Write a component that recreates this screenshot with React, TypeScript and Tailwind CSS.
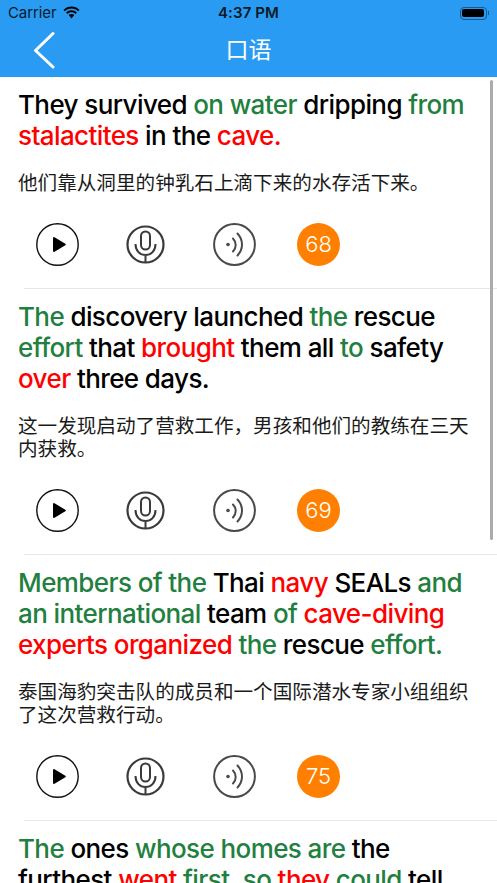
import React from 'react';

type Seg = [string, 'k' | 'g' | 'r'];

type Item = {
  segs: Seg[];
  zh: string;
  score: number;
};

const items: Item[] = [
  {
    segs: [
      ['They survived ', 'k'],
      ['on water ', 'g'],
      ['dripping ', 'k'],
      ['from ', 'g'],
      ['stalactites ', 'r'],
      ['in the ', 'k'],
      ['cave.', 'r'],
    ],
    zh: '他们靠从洞里的钟乳石上滴下来的水存活下来。',
    score: 68,
  },
  {
    segs: [
      ['The ', 'g'],
      ['discovery launched ', 'k'],
      ['the ', 'g'],
      ['rescue ', 'k'],
      ['effort ', 'g'],
      ['that ', 'k'],
      ['brought ', 'r'],
      ['them all ', 'k'],
      ['to ', 'g'],
      ['safety ', 'k'],
      ['over ', 'r'],
      ['three days.', 'k'],
    ],
    zh: '这一发现启动了营救工作，男孩和他们的教练在三天内获救。',
    score: 69,
  },
  {
    segs: [
      ['Members of the ', 'g'],
      ['Thai ', 'k'],
      ['navy ', 'r'],
      ['SEALs ', 'k'],
      ['and an international ', 'g'],
      ['team ', 'k'],
      ['of ', 'g'],
      ['cave-diving experts organized ', 'r'],
      ['the ', 'g'],
      ['rescue ', 'k'],
      ['effort.', 'g'],
    ],
    zh: '泰国海豹突击队的成员和一个国际潜水专家小组组织了这次营救行动。',
    score: 75,
  },
  {
    segs: [
      ['The ', 'g'],
      ['ones ', 'k'],
      ['whose homes are ', 'g'],
      ['the furthest ', 'k'],
      ['went ', 'r'],
      ['first, so ', 'g'],
      ['they ', 'r'],
      ['could ', 'g'],
      ['tell', 'k'],
    ],
    zh: '',
    score: 0,
  },
];

const PlayIcon = () => (
  <svg width="43" height="43" viewBox="0 0 43 43" fill="none">
    <circle cx="21.5" cy="21.5" r="20.7" stroke="#111" strokeWidth="1.4" />
    <path d="M18 15v13l10.800-6.500z" fill="#000" stroke="#000" strokeWidth="2" strokeLinejoin="round" />
  </svg>
);

const MicIcon = () => (
  <svg width="43" height="43" viewBox="0 0 43 43" fill="none" stroke="#3a3a3a" strokeWidth="2">
    <circle cx="21.5" cy="21.5" r="18" strokeWidth="2.2" />
    <rect x="17" y="8.500" width="9" height="18" rx="4.500" />
    <path d="M11.500 21c0 7 4.500 11 10 11s10-4 10-11M21.500 32v7.500" />
  </svg>
);

const SoundIcon = () => (
  <svg width="43" height="43" viewBox="0 0 43 43" fill="none" stroke="#4a4a4a" strokeWidth="2">
    <circle cx="21.5" cy="21.5" r="20.400" />
    <circle cx="15" cy="21.5" r="1.800" fill="#4a4a4a" stroke="none" />
    <path d="M20 15.500c3.600 3.800 3.600 9.200 0 13" strokeLinecap="round" />
    <path d="M24.500 10.500c6 6.500 6 15.500 0 22" strokeLinecap="round" />
  </svg>
);

const Row: React.FC<{ item: Item }> = ({ item }) => (
  <div className="border-b border-[#e6e6e6] ml-6">
    <div className="-ml-6 pl-[18px] pr-[26px] pt-3 pb-[22px]">
      <p className="text-[26px] leading-[31px] font-medium tracking-[-0.6px]">
        {item.segs.map(([t, c], i) => (
          <span
            key={i}
            className={c === 'g' ? 'text-[#1f8040]' : c === 'r' ? 'text-[#ff0000]' : 'text-black'}
          >
            {t}
          </span>
        ))}
      </p>
      <p className="mt-[19px] text-[19.6px] leading-[23px] text-[#1a1a1a] font-['Noto_Sans_CJK_SC',sans-serif]">
        {item.zh}
      </p>
      <div className="mt-[30px] flex items-center pl-[17.5px]">
        <PlayIcon />
        <div className="ml-[45.5px]">
          <MicIcon />
        </div>
        <div className="ml-[45.5px]">
          <SoundIcon />
        </div>
        <div className="ml-[41.5px] w-[43px] h-[43px] rounded-full bg-[#ff8000] text-white text-[22px] font-light flex items-center justify-center">
          {item.score}
        </div>
      </div>
    </div>
  </div>
);

const App: React.FC = () => {
  return (
    <div className="relative w-[497px] h-[883px] overflow-hidden bg-white font-['Inter',sans-serif]">
      {/* Status bar + nav */}
      <header className="bg-[#2a9bf3] h-[77px]">
        <div className="h-[26px] flex items-center justify-between pl-2 pr-2 text-[15px] text-[#0b1a26] relative">
          <div className="flex items-center gap-[6px]">
            <span className="font-['Inter',sans-serif] tracking-[-0.1px]">Carrier</span>
            <svg width="19" height="14" viewBox="0 0 18 14" fill="#000">
              <path d="M9 2.600c2.600 0 4.900 1 6.700 2.700l1.300-1.400C14.900 1.800 12.100.6 9 .6S3.100 1.800 1 3.900l1.300 1.400C4.100 3.600 6.400 2.600 9 2.600z" />
              <path d="M9 6.300c1.600 0 3 .6 4.100 1.600l1.300-1.400C13 5.100 11.100 4.300 9 4.300s-4 .8-5.400 2.200l1.300 1.400C6 6.900 7.400 6.300 9 6.300z" />
              <path d="M9 8c-1.100 0-2.100.4-2.800 1.100L9 12.500l2.800-3.400C11.100 8.400 10.100 8 9 8z" />
            </svg>
          </div>
          <span className="absolute left-1/2 -translate-x-1/2 font-semibold font-['Inter',sans-serif] tracking-[0.1px]">4:37 PM</span>
          <div className="flex items-center">
            <div className="w-[27px] h-[13px] rounded-[4px] border border-[#155a90] p-[1.5px]">
              <div className="w-full h-full rounded-[2px] bg-black" />
            </div>
            <div className="w-[1.5px] h-[4px] bg-[#155a90] ml-[1px]" />
          </div>
        </div>
        <div className="relative h-[51px] flex items-center justify-center pb-[7px]">
          <svg className="absolute left-[32px] top-[5px]" width="24" height="38" viewBox="0 0 24 38" fill="none">
            <path d="M21 2.500L3.500 19.500 21 36" stroke="#fff" strokeWidth="3" strokeLinecap="round" strokeLinejoin="round" />
          </svg>
          <span className="text-white text-[23px] font-['Noto_Sans_CJK_SC',sans-serif]">口语</span>
        </div>
      </header>

      {items.map((item, i) => (
        <Row key={i} item={item} />
      ))}

      {/* Scroll indicator */}
      <div className="absolute left-[489.5px] top-[80px] w-[3.5px] h-[460px] rounded-full bg-[#ababab]" />
    </div>
  );
};

export default App;
